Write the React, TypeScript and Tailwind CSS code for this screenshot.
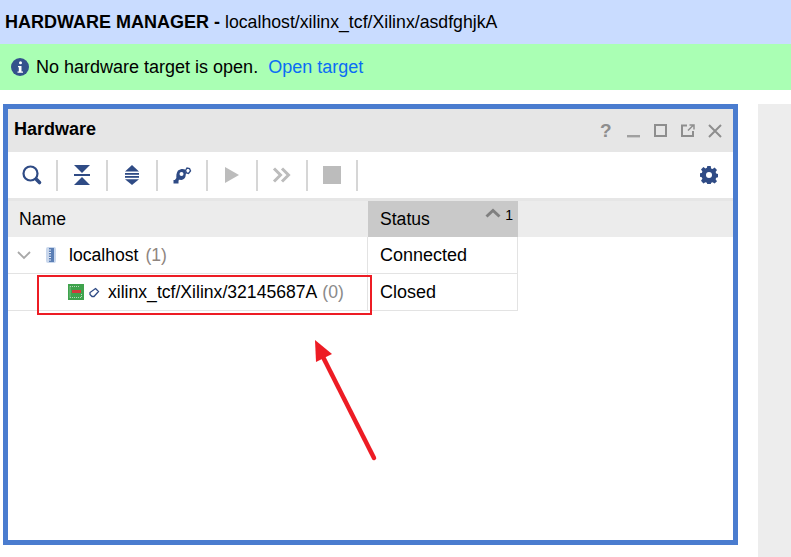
const navy = "#2f4b85"

function SearchIcon() {
    return (
        <svg width="22" height="22" viewBox="0 0 22 22" fill="none">
            <circle cx="9.5" cy="9.5" r="7" stroke={navy} strokeWidth="2.2" />
            <path d="M15.500 15.500l3 3" stroke={navy} strokeWidth="3.600" strokeLinecap="round" />
        </svg>
    )
}

function CollapseIcon() {
    return (
        <svg width="18" height="22" viewBox="0 0 18 22" fill={navy}>
            <path d="M1 1h16l-8 8z" />
            <rect x="1" y="10" width="16" height="2" />
            <path d="M1 21h16l-8-8z" />
        </svg>
    )
}

function ExpandIcon() {
    return (
        <svg width="16" height="22" viewBox="0 0 16 22" fill={navy}>
            <path d="M1 7.500h14L8 1z" />
            <rect x="1" y="9" width="14" height="1.800" />
            <rect x="1" y="12" width="14" height="1.800" />
            <path d="M1 15.200h14L8 21z" />
        </svg>
    )
}

function ConnectIcon() {
    return (
        <svg width="20" height="20" viewBox="0 0 20 20" fill="none">
            <path d="M6 5.500c2-1.500 5-2 7-1l1 3.500-.5 3.500c-.5 2-2 3-4 3.500l-4.500-.5c-1.500-3-.5-6.500 1-9z" fill={navy} />
            <circle cx="9.500" cy="9" r="2" fill="#fff" />
            <path d="M13.500 5.500l1.500-2.500 2.500.5 1 2.500-2 2.500-2-.5z" fill="#fff" stroke={navy} strokeWidth="1.400" />
            <path d="M6 13.500l-2 2.500" stroke={navy} strokeWidth="3" />
            <path d="M1.500 15h5v3.500h-5z" fill={navy} />
        </svg>
    )
}

function PlayIcon() {
    return (
        <svg width="16" height="18" viewBox="0 0 16 18" fill="#bcbcbc">
            <path d="M1 1l14 8-14 8z" />
        </svg>
    )
}

function ForwardIcon() {
    return (
        <svg width="20" height="16" viewBox="0 0 20 16" fill="none" stroke="#bcbcbc" strokeWidth="3">
            <path d="M2 1.500L8.500 8 2 14.500" />
            <path d="M10 1.500L16.500 8 10 14.500" />
        </svg>
    )
}

function GearIcon() {
    return (
        <svg width="18" height="18" viewBox="0 0 18 18">
            <path
                d="M7.300 0h3.400l.4 2.400 1.500.6 2-1.400 2.400 2.400-1.400 2 .6 1.500 1.800.4v3.400l-1.800.4-.6 1.500 1.400 2-2.400 2.400-2-1.400-1.500.6-.4 1.800H7.300l-.4-1.800-1.500-.6-2 1.400L1 14.800l1.400-2-.6-1.500L0 10.700V7.300l1.800-.4.600-1.500L1 3.400 3.400 1l2 1.400 1.500-.6z"
                fill={navy}
            />
            <circle cx="9" cy="9" r="3" fill="#fff" />
        </svg>
    )
}

function ServerIcon() {
    return (
        <svg width="12" height="18" viewBox="0 0 12 18">
            <rect x="1" y="1" width="10" height="16" rx="2" fill="#c9d7ec" />
            <rect x="4" y="2" width="5" height="14" fill="#5b7fb5" />
            <path d="M4 4h2M4 6.500h2M4 9h2M4 11.500h2M4 14h2" stroke="#e8eef8" strokeWidth="1" />
        </svg>
    )
}

function BoardIcon() {
    return (
        <svg width="16" height="16" viewBox="0 0 16 16">
            <rect width="16" height="16" fill="#3fa34d" />
            <path d="M2 2.500h10M2 2.500v11M13.500 10v4M2 13.500h11" stroke="#b5d9ba" strokeWidth="1" strokeDasharray="1 1" />
            <rect x="4" y="6" width="9" height="3" fill="#d23b3b" />
        </svg>
    )
}

function TagIcon() {
    return (
        <svg width="11" height="11" viewBox="0 0 11 11" fill="#fff" stroke={navy} strokeWidth="1.300">
            <path d="M6.500 1.500l3 3-4.500 5H3l-2-2V5.500z" />
        </svg>
    )
}

function WindowControls() {
    return (
        <div className="mt-[3px] flex items-center text-[#8e8e8e]">
            <span className="w-[26px] text-[19px] font-bold leading-none">?</span>
            <svg width="16" height="16" viewBox="0 0 16 16" className="mr-[11px]">
                <rect x="1" y="12" width="13" height="2.400" fill="#a0a0a0" />
            </svg>
            <svg width="16" height="16" viewBox="0 0 16 16" fill="none" stroke="#8e8e8e" strokeWidth="2" className="mr-[11px]">
                <rect x="2" y="2" width="11" height="11" />
            </svg>
            <svg width="16" height="16" viewBox="0 0 16 16" fill="none" stroke="#8e8e8e" strokeWidth="2" className="mr-[11px]">
                <path d="M7 2.500H2v10.500h11V8" />
                <path d="M8 7.500l5-5M9.500 2H14v4.500" strokeWidth="1.500" />
            </svg>
            <svg width="16" height="16" viewBox="0 0 16 16" fill="none" stroke="#8e8e8e" strokeWidth="2">
                <path d="M2 2l12 12M14 2L2 14" />
            </svg>
        </div>
    )
}

function ToolButton({ children }: { children: React.ReactNode }) {
    return (
        <div className="flex h-[46px] w-[50px] items-center">
            <div className="flex flex-1 items-center justify-center">{children}</div>
            <div className="h-[31px] w-[2px] bg-[#d6d6d6]" />
        </div>
    )
}

export default function App() {
    return (
        <div className="flex h-[557px] flex-col overflow-hidden bg-white font-['Liberation_Sans',Arial,sans-serif] text-[18px] text-black">
            <div className="flex h-[44px] items-center bg-[#c9dcff] pl-[5px]">
                <span className="font-bold">HARDWARE MANAGER -</span>
                <span className="ml-[5px] text-[17.7px]">localhost/xilinx_tcf/Xilinx/asdfghjkA</span>
            </div>
            <div className="flex h-[46px] items-center bg-[#aaffb4] pl-[11px]">
                <svg width="18" height="18" viewBox="0 0 18 18">
                    <circle cx="9" cy="9" r="9" fill="#34518c" />
                    <circle cx="9.500" cy="4.800" r="1.500" fill="#fff" />
                    <path d="M7 8h3.500v5.500H12v1.200H6.500v-1.200h1.300V9.200H7z" fill="#fff" />
                </svg>
                <span className="ml-[7px]">No hardware target is open.</span>
                <span className="ml-[10px] text-[#0a6cf5]">Open target</span>
            </div>

            <div className="flex flex-1 items-start pt-[14px] pl-[3px]">
                <div className="relative flex h-[441px] w-[735px] flex-none flex-col border-[5px] border-[#4a7ccf]">
                    <div className="flex h-[43px] items-center justify-between bg-[#e6e6e6] pr-[10px] pb-[3px] pl-[6px]">
                        <span className="font-bold">Hardware</span>
                        <WindowControls />
                    </div>
                    <div className="flex h-[46px] items-center pr-[15px]">
                        <ToolButton><SearchIcon /></ToolButton>
                        <ToolButton><CollapseIcon /></ToolButton>
                        <ToolButton><ExpandIcon /></ToolButton>
                        <ToolButton><ConnectIcon /></ToolButton>
                        <ToolButton><PlayIcon /></ToolButton>
                        <ToolButton><ForwardIcon /></ToolButton>
                        <ToolButton>
                            <div className="size-[18px] bg-[#bcbcbc]" />
                        </ToolButton>
                        <div className="ml-auto">
                            <GearIcon />
                        </div>
                    </div>
                    <div className="h-[3px] bg-[#e6e6e6]" />
                    <div className="flex h-[36px] bg-[#ececec] text-[17.6px]">
                        <div className="flex w-[360px] items-center pl-[11px]">Name</div>
                        <div className="relative flex w-[150px] items-center bg-[#c9c9c9] pl-[12px]">
                            Status
                            <svg width="16" height="10" viewBox="0 0 16 10" fill="none" stroke="#7f7f7f" strokeWidth="3" className="absolute top-[7px] left-[117px]">
                                <path d="M1.500 8.500L8 2.500l6.500 6" />
                            </svg>
                            <span className="absolute top-[4px] right-[5px] text-[14px]">1</span>
                        </div>
                    </div>
                    <div className="flex h-[37px] text-[17.6px]">
                        <div className="flex w-[360px] items-center border-r border-b border-[#e3e3e3]">
                            <svg width="14" height="10" viewBox="0 0 14 10" fill="none" stroke="#a8a8a8" strokeWidth="1.800" className="ml-[9px]">
                                <path d="M1 2l6 6 6-6" />
                            </svg>
                            <span className="ml-[14px] flex"><ServerIcon /></span>
                            <span className="ml-[12px]">localhost</span>
                            <span className="ml-[7px] text-[#8f8580]">(1)</span>
                        </div>
                        <div className="flex w-[150px] items-center border-r border-b border-[#e3e3e3] pl-[12px] text-[18px]">Connected</div>
                    </div>
                    <div className="flex h-[37px] text-[17.6px]">
                        <div className="flex w-[360px] items-center border-r border-b border-[#e3e3e3]">
                            <span className="ml-[60px] flex"><BoardIcon /></span>
                            <span className="ml-[5px] flex"><TagIcon /></span>
                            <span className="ml-[8px]">xilinx_tcf/Xilinx/32145687A</span>
                            <span className="ml-[5px] text-[#8a8a8a]">(0)</span>
                        </div>
                        <div className="flex w-[150px] items-center border-r border-b border-[#e3e3e3] pl-[12px] text-[18px]">Closed</div>
                    </div>

                    {/* annotation drawn on top of the screenshot */}
                    <div className="absolute top-[166px] left-[29px] h-[40px] w-[335px] border-2 border-[#ed1c24]" />
                    <svg width="80" height="130" viewBox="0 0 80 130" className="absolute top-[227px] left-[300px]">
                        <path d="M13 17l53 105" stroke="#ed1c24" strokeWidth="4.500" strokeLinecap="round" />
                        <path d="M7 4l17 14-16 8z" fill="#ed1c24" />
                    </svg>
                </div>
                <div className="ml-[20px] h-full flex-1 bg-[#ededed]" />
            </div>
        </div>
    )
}
